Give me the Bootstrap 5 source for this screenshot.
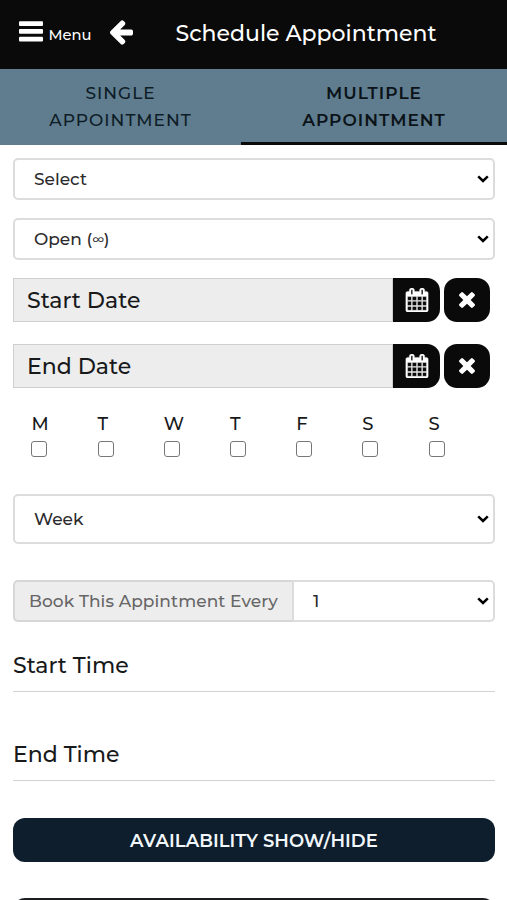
<!DOCTYPE html>
<html lang="en">
<head>
<meta charset="utf-8">
<meta name="viewport" content="width=device-width, initial-scale=1">
<title>Schedule Appointment</title>
<link href="https://cdn.jsdelivr.net/npm/bootstrap@5.3.0/dist/css/bootstrap.min.css" rel="stylesheet">
<style>
body{font-family:Montserrat,Inter,sans-serif;font-weight:500;color:#18191b;height:900px;overflow:hidden;background:#fff}
.topbar{height:69px;background:#0a0a0a;padding-left:19px}
.bars-icon{margin-top:-6px}
.menu-text{font-size:14.7px;margin-left:5.5px;margin-top:1px;width:43px;line-height:24px}
.back-icon{margin-left:18.5px;margin-top:-4px}
.page-title{font-size:22px;font-weight:500;line-height:30px;margin:-1px 0 0 42.5px}
.tabs{height:76px;background:#5f7d8e}
.tab-item{border:0;border-radius:0;background:none;text-transform:uppercase;font-size:17px;font-weight:500;line-height:27px;letter-spacing:1px;padding:3px 0 0;color:#0e1c27;border-bottom:3px solid transparent}
.tab-one{width:241px}
.tab-two{width:266px;font-weight:600;color:#0b1319;border-color:#0a0a0a}
.page-body{padding:13px 12px 0 13px}
.field.form-select{height:42px;border:2px solid #dcdcdc;border-radius:5px;padding:0 30px 0 19px;font-size:17px;font-weight:500;line-height:38px;color:#2b2b2d;
background-image:url("data:image/svg+xml,%3Csvg xmlns='http://www.w3.org/2000/svg' viewBox='0 0 12 8'%3E%3Cpath d='M1.2 1.4 6 6 10.8 1.4' fill='none' stroke='%23000' stroke-width='2.5'/%3E%3C/svg%3E");background-size:12px 8px;background-position:right 4.5px center}
.field.week{height:50px}
.infinity{font-size:12.5px;line-height:1;position:relative;top:-1px}
.date-box{height:44px;background:#ededed;border:1px solid #cfcfcf;padding-left:13px;font-size:22px;line-height:43px}
.sq-btn{width:46px;height:44px;background:#0a0a0a;border-radius:13px}
.cal-btn{width:47px;border-radius:0 13px 13px 0}
.clear-btn{margin:0 5px 0 4px}
.day{width:66.2px;font-size:18px;line-height:27px}
.day .form-check-input{width:16px;height:16px;margin:3px 0 0;border:1px solid #777;border-radius:3px;display:block}
.every{width:279px;height:42px;background:#ededed;border:2px solid #d6d6d6;border-right:0;border-radius:5px 0 0 5px;padding:1px 0 0 14px;font-size:17px;letter-spacing:.08px;color:#666}
.field.every-num{border-radius:0 5px 5px 0;width:203px}
.time-row{font-size:22px;line-height:32px;padding:1px 0 9px;border-bottom:1.5px solid #d3d3d3}
.wide-btn{height:44px;border-radius:12px;background:#0e1e2d;color:#f2f7fb;font-size:18px;font-weight:600;line-height:44px;letter-spacing:.05px}
.wide-btn:hover{background:#0e1e2d;color:#f2f7fb}
.more-btn{background:#1c1d1f}
</style>
</head>
<body>
<header class="topbar d-flex align-items-center text-white">
<svg class="bars-icon" width="24" height="21" viewBox="0 0 24 21" fill="#fff"><rect y=".3" width="24" height="4.7" rx="1"/><rect y="8" width="24" height="4.7" rx="1"/><rect y="15.8" width="24" height="4.7" rx="1"/></svg>
<span class="menu-text text-nowrap">Menu</span>
<svg class="back-icon" width="23" height="25" viewBox="192 176 1472 1568" fill="#fff"><path d="M1664 896v128q0 53-32.5 90.5t-84.5 37.5h-704l293 294q38 36 38 90t-38 90l-75 76q-37 37-90 37-52 0-91-37l-651-652q-37-37-37-90 0-52 37-91l651-650q38-38 91-38 52 0 90 38l75 74q38 38 38 91t-38 91l-293 293h704q52 0 84.5 37.5t32.5 90.5z"/></svg>
<h1 class="page-title text-nowrap">Schedule Appointment</h1>
</header>
<nav class="tabs d-flex text-center">
<button class="tab-item tab-one">Single<br>Appointment</button>
<button class="tab-item tab-two">Multiple<br>Appointment</button>
</nav>
<main class="page-body">
<select class="form-select field"><option>Select</option></select>
<div class="form-select field" role="combobox" tabindex="0" style="margin-top:18px">Open (<span class="infinity">∞</span>)</div>
<div class="d-flex" style="margin-top:18px">
<div class="date-box flex-grow-1">Start Date</div>
<button class="btn sq-btn cal-btn p-0 d-flex align-items-center justify-content-center" aria-label="Pick date"><svg width="24" height="24" viewBox="0 0 1792 1792" fill="#fff" stroke="#fff" stroke-width="28"><path id="cal" d="M192 1664h288v-288h-288v288zm352 0h320v-288h-320v288zm-352-352h288v-320h-288v320zm352 0h320v-320h-320v320zm-352-384h288v-288h-288v288zm736 736h320v-288h-320v288zm-384-736h320v-288h-320v288zm768 736h288v-288h-288v288zm-384-352h320v-320h-320v320zm-352-864v-288q0-13-9.5-22.5t-22.5-9.5h-64q-13 0-22.5 9.5t-9.5 22.5v288q0 13 9.5 22.5t22.5 9.5h64q13 0 22.5-9.5t9.5-22.5zm736 864h288v-320h-288v320zm-384-384h320v-288h-320v288zm384 0h288v-288h-288v288zm32-480v-288q0-13-9.5-22.5t-22.5-9.5h-64q-13 0-22.5 9.5t-9.5 22.5v288q0 13 9.5 22.5t22.5 9.5h64q13 0 22.5-9.5t9.5-22.5zm384-64v1280q0 52-38 90t-90 38h-1408q-52 0-90-38t-38-90v-1280q0-52 38-90t90-38h128v-96q0-66 47-113t113-47h64q66 0 113 47t47 113v96h384v-96q0-66 47-113t113-47h64q66 0 113 47t47 113v96h128q52 0 90 38t38 90z"/></svg></button>
<button class="btn sq-btn clear-btn p-0 d-flex align-items-center justify-content-center" aria-label="Clear"><svg width="16" height="16" viewBox="302 366 1188 1188" fill="#fff"><path id="times" d="M1490 1322q0 40-28 68l-136 136q-28 28-68 28t-68-28l-294-294-294 294q-28 28-68 28t-68-28l-136-136q-28-28-28-68t28-68l294-294-294-294q-28-28-28-68t28-68l136-136q28-28 68-28t68 28l294 294 294-294q28-28 68-28t68 28l136 136q28 28 28 68t-28 68l-294 294 294 294q28 28 28 68z"/></svg></button>
</div>
<div class="d-flex" style="margin-top:22px">
<div class="date-box flex-grow-1">End Date</div>
<button class="btn sq-btn cal-btn p-0 d-flex align-items-center justify-content-center" aria-label="Pick date"><svg width="24" height="24" viewBox="0 0 1792 1792" fill="#fff" stroke="#fff" stroke-width="28"><use href="#cal"/></svg></button>
<button class="btn sq-btn clear-btn p-0 d-flex align-items-center justify-content-center" aria-label="Clear"><svg width="16" height="16" viewBox="302 366 1188 1188" fill="#fff"><use href="#times"/></svg></button>
</div>
<div class="d-flex" style="margin-top:23px;padding-left:18.4px">
<label class="day">M<input type="checkbox" class="form-check-input"></label>
<label class="day">T<input type="checkbox" class="form-check-input"></label>
<label class="day">W<input type="checkbox" class="form-check-input"></label>
<label class="day">T<input type="checkbox" class="form-check-input"></label>
<label class="day">F<input type="checkbox" class="form-check-input"></label>
<label class="day">S<input type="checkbox" class="form-check-input"></label>
<label class="day">S<input type="checkbox" class="form-check-input"></label>
</div>
<select class="form-select field week" style="margin-top:37px"><option>Week</option></select>
<div class="d-flex" style="margin-top:36px">
<div class="every d-flex align-items-center text-nowrap">Book This Appintment Every</div>
<select class="form-select field every-num"><option>1</option></select>
</div>
<div class="time-row" style="margin-top:27px">Start Time</div>
<div class="time-row" style="margin-top:46px">End Time</div>
<button class="btn wide-btn w-100 d-block p-0" style="margin-top:37px">AVAILABILITY SHOW/HIDE</button>
<button class="btn wide-btn more-btn w-100 d-block p-0" style="margin-top:36px" aria-label="More"></button>
</main>
<script src="https://cdn.jsdelivr.net/npm/bootstrap@5.3.0/dist/js/bootstrap.bundle.min.js"></script>
</body>
</html>
